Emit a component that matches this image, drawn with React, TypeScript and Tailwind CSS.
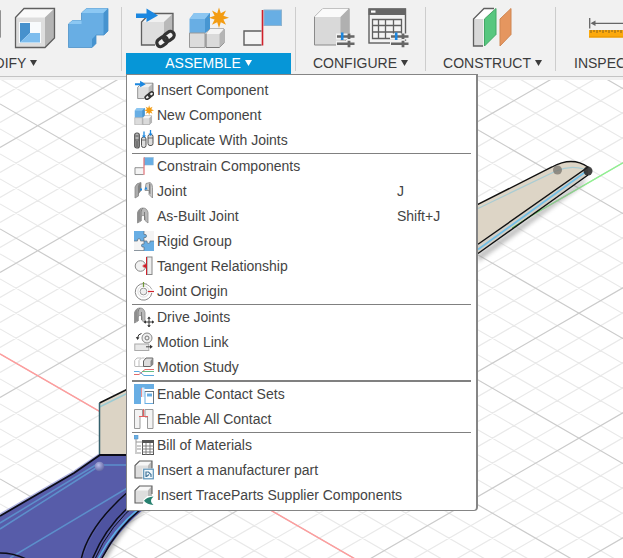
import type { ReactNode } from "react";

const G = "#5f5f5f";
const BLUE = "#68aee4";

type IconProps = { children: ReactNode; box?: number; small?: boolean };

function Icon({ children, box = 42, small = false }: IconProps) {
  return (
    <svg
      viewBox={`0 0 ${box} ${box}`}
      className={small ? "size-5 shrink-0" : "size-[42px] shrink-0"}
      fill="none"
      aria-hidden="true"
    >
      {children}
    </svg>
  );
}

/* ---------- toolbar drawings, 42 × 42 units ---------- */

const chain = (
  <g transform="translate(31.5 32) rotate(-38)" stroke="#333" strokeWidth="3.2">
    <rect x="-10" y="-3.8" width="11.5" height="7.6" rx="3.8" />
    <rect x="-1.5" y="-3.8" width="11.5" height="7.6" rx="3.8" />
  </g>
);

const insertArt = (
  <>
    <path d="M7.5 15 16 6.5h23V31l-7 7H7.5z" fill="#dedede" />
    <path d="M7.5 15 16 6.5h23L30 15z" fill="#f0f0f0" />
    <path d="m30 15 9-8.5V31l-7 7h-2z" fill="#b9b9b9" />
    <path d="M21 38H7.5V15L16 6.5h23V24" stroke={G} strokeWidth="1.3" />
    <g stroke="#f1f1f1" strokeWidth="6">
      <path d="m25 36 13-9" />
    </g>
    {chain}
    <path d="M2 6.5h10.5v-5L24 8.5 12.5 15v-4H2z" fill="#1b87e0" />
  </>
);

const newArt = (
  <>
    <path d="M1.5 12 6 6h16v16l-5 4H1.5z" fill={BLUE} />
    <path d="M1.5 12 6 6h16l-5 6z" fill="#8cc6f1" />
    <path d="m17 12 5-6v16l-5 4z" fill="#4796d2" />
    <path d="M1.5 26H17v14.500H1.500z" fill="#dcdcdc" stroke="#999" />
    <path d="m18 27 4-5h14v14l-4.500 4.500H18z" fill="#dadada" stroke="#777" />
    <path d="m18 27 4-5h14l-4.500 5z" fill="#f4f4f4" />
    <path d="m31.500 27 4.500-5v14l-4.500 4.500z" fill="#b5b5b5" />
    <path
      d="m31 .5 1.800 5.700 5.200-2.600-2.600 5.200 5.600 1.900-5.600 1.900 2.600 5.200-5.200-2.600L31 21l-1.800-5.800-5.200 2.600 2.600-5.200-5.600-1.900 5.600-1.900L24 3.600l5.200 2.600z"
      fill="#f39c12"
    />
  </>
);

const constrainArt = (
  <>
    <rect x="22" y="3" width="17.500" height="15.500" fill={BLUE} stroke="#8fb4cf" />
    <path d="M19.500 24H2v14h17.500" fill="#f4f4f4" stroke={G} strokeWidth="1.400" />
    <path d="M20.500 3v35.500" stroke="#d0202b" strokeWidth="1.600" />
  </>
);

const sliders = (
  <>
    <path d="M23 29.500h19M23 36.700h19" stroke="#f1f1f1" strokeWidth="6" />
    <path d="M24 29.500h17.500M24 36.700h17.500" stroke="#666" strokeWidth="2.400" />
    <path d="M36 26.500v5.500M36 33.800v6.500" stroke="#666" strokeWidth="2.800" />
    <path d="M29.200 25.500V33" stroke="#1b87e0" strokeWidth="2.600" />
  </>
);

const previousArt = (
  <path d="M2 14 14 4h26v26L30 40H2z" fill="#c9c9c9" stroke={G} strokeWidth="1.300" />
);

const shellArt = (
  <>
    <path d="M1.500 10.500 10 1.500h30.500V31L31 40.500H1.500z" fill="#dedede" />
    <path d="M1.500 10.500 10 1.500h30.500L31 10.500z" fill="#fafafa" />
    <path d="m31 10.500 9.500-9V31L31 40.500z" fill="#b4b4b4" />
    <path d="M1.500 10.500 10 1.500h30.500V31L31 40.500H1.500z" stroke={G} strokeWidth="1.300" />
    <path d="M5 15h22v21H5z" fill="#f8fbfd" />
    <path d="M6 16h10v10L6 35.500z" fill="#4691cd" />
    <path d="m6 35.500 10-9.500h10v9.500z" fill="#7dbdee" />
  </>
);

const combineArt = (
  <>
    <path
      d="m.5 17 4-3.500h9V6l5-4.500H40V24l-4 4h-8v8.500l-4 4H.5z"
      fill={BLUE}
      stroke="#4c92c8"
      strokeWidth=".8"
    />
    <path d="m13.500 6 5-4.500H40L35.500 6zM.5 17l4-3.500h9V17z" fill="#8cc8f3" />
    <path d="m35.500 6 4.500-4.500V24l-4.500 4zM24 32l4-4v8.500l-4 4z" fill="#4693cf" />
  </>
);

const configureArt = (
  <>
    <path d="M1.500 10 10 1.500h26V30l-8 8H1.500z" fill="#d9d9d9" stroke="#8a8a8a" />
    <path d="M1.500 10 10 1.500h26L27.500 10z" fill="#fafafa" />
    <path d="M27.500 10 36 1.500V30l-8.500 8z" fill="#b0b0b0" />
    {sliders}
  </>
);

const tableArt = (
  <>
    <rect x="2" y="2" width="36.500" height="34" fill="#f3f3f3" stroke={G} strokeWidth="1.400" />
    <path d="M1.500 1.500H39v6.500H1.500z" fill="#666" />
    <path d="M4 3.500h4.500v2.200H4z" fill="#fff" />
    <path
      d="M5.500 12.500h29v19h-29zM11.500 12.500v19M18.500 12.500v19M26.500 12.500v19M5.500 18.500h29M5.500 25h29"
      stroke={G}
      strokeWidth="1.300"
    />
    {sliders}
  </>
);

const constructArt = (
  <>
    <path d="M1.500 12 12 1.500h10L11.500 12z" fill="#fff" />
    <path d="M1.500 12h9.500v27H1.500z" fill="#d8d8d8" />
    <path d="M11 39H1.500V12L12 1.500h10" stroke={G} strokeWidth="1.300" />
    <path d="M12.500 12 24 1.500v26L12.500 39z" fill="#57c77f" stroke="#43a866" />
    <path d="M28 12 39 1.500v26L28 39z" fill="#e5965f" stroke="#cf8652" />
  </>
);

const inspectArt = (
  <>
    <path d="M.7 11v10.500M41.300 11v10.500M3 16.300h36" stroke="#666" strokeWidth="1.300" />
    <path d="m1.500 16.300 5-2.800v5.600zM40.500 16.300l-5-2.800v5.600z" fill="#666" />
    <path d="M0 23h42v7.500H0z" fill="#fca90b" />
    <path d="M0 30h42" stroke="#e69500" />
    <path
      d="M2 23v3M5 23v2M8 23v3M11 23v2M14 23v3M17 23v2M20 23v3M23 23v2M26 23v3M29 23v2M32 23v3M35 23v2M38 23v3"
      stroke="#7a5a1c"
      strokeWidth=".9"
    />
  </>
);

/* ---------- menu drawings, 20 × 20 units ---------- */

const bracket = (
  <>
    <path d="M3.500 17V6.500Q5 2 9 2q4 0 5 4.500V17l-3-2.500v-4q-2-2.500-4 0V15z" fill="#b9b9b9" stroke="#8b8b8b" strokeWidth=".8" />
    <path d="M7 15V6q.5-3 2-4M10.500 14V6" stroke="#777" strokeWidth=".9" />
    <path d="M3.500 17V6.500Q4.500 3.500 7 2.500 6 5 6.500 14z" fill="#8d8d8d" />
  </>
);

const duplicateArt = (
  <>
    <rect x=".7" y="3" width="4.600" height="15" rx="2" fill="#b5b5b5" stroke="#555" strokeWidth="1.200" />
    <path d="M1 10h4M1.500 6h3" stroke="#555" />
    <path d="M1.500 11h3v6h-3z" fill="#777" />
    <rect x="7.500" y="7" width="4.500" height="10.500" rx="2" fill="#ddd" stroke="#555" />
    <rect x="14" y="4.500" width="5" height="11" rx="2" fill="#ddd" stroke="#555" />
    <path d="M7.500 10h4.500M14 8h5" stroke="#555" strokeWidth=".8" />
    <path d="M10 1.500V7M16.500 0v5" stroke="#1b87e0" strokeWidth="1.300" />
    <path d="m8 5.500 2 2.500 2-2.500zM14.500 3.500l2 2.500 2-2.500z" fill="#1b87e0" />
  </>
);

const jointArt = (
  <>
    <path d="M1 17V6q1-4 6-4.500v8L4.500 12v3z" fill="#aaa" stroke="#888" strokeWidth=".8" />
    <path d="M4 14V5q0-2 3-3.500v8z" fill="#828282" />
    <path d="m11 9.500 1-7 4-1q2.500 1 2.500 5V17L15 13.500v-4z" fill="#ccc" stroke="#858585" strokeWidth=".8" />
    <path d="m15 2 1.500 1.500v10L15 12z" fill="#808080" />
    <path d="M6 7.500h2v2H6zM10.500 8.500l1.500-3 1.500 3z" fill="#1b87e0" />
  </>
);

const rigidArt = (
  <>
    <path d="M0 0h10v10H0zM10 10h10v10H10z" fill={BLUE} />
    <path d="M10 0h10v10H10zM0 10h10v9.500H0z" fill="#f4f4f4" />
    <circle cx="11" cy="5" r="1.700" fill={BLUE} />
    <circle cx="9" cy="14.500" r="1.700" fill={BLUE} />
    <circle cx="5" cy="9.300" r="1.600" fill="#f4f4f4" />
    <circle cx="14.500" cy="10.700" r="1.600" fill="#f4f4f4" />
    <path
      d="M10 0v3.500q2.500-.6 2.500 1.500T10 6.500V13q-2.500-.6-2.500 1.500T10 16v3.500M0 10h3.500q-.5-2.300 1.500-2.300T6.500 10H13q-.5 2.300 1.500 2.300T16 10h4M0 19.500h10"
      stroke="#5d6c78"
      strokeWidth=".7"
    />
  </>
);

const tangentArt = (
  <>
    <circle cx="6.500" cy="10" r="5.300" fill="#f1f1f1" stroke="#888" />
    <rect x="13" y="1" width="5" height="17.500" fill="#eee" stroke="#888" />
    <path d="M12.500 1v18M8.500 10h4" stroke="#d0202b" />
    <path d="M9.500 8.500h2.500v3H9.500z" fill="#d0202b" />
  </>
);

const originArt = (
  <>
    <path d="M13 3.300A8.300 8.300 0 1 0 17.800 12" stroke="#888" />
    <path d="M12 3q4 1.500 6 5.500" stroke="#aaa" />
    <circle cx="9.500" cy="10.500" r="3.400" fill="#eee" stroke="#999" />
    <circle cx="9.500" cy="10.500" r="5.600" stroke="#ddd" />
    <path d="M9.500 1v5" stroke="#6f9836" strokeWidth="1.200" />
    <path d="M14 10.500h6" stroke="#d0202b" strokeWidth="1.200" />
  </>
);

const driveArt = (
  <>
    <g transform="translate(-3 -1)">{bracket}</g>
    <path d="M15 10.500v9M10.500 15h9" stroke="#333" />
    <path d="m15 9.500 1.800 2.200h-3.600zM15 20.500l1.800-2.200h-3.600zM9.800 15l2.200-1.800v3.600zM20.200 15 18 13.200v3.600z" fill="#333" />
  </>
);

const linkArt = (
  <>
    <circle cx="13" cy="6" r="5" fill="#eee" stroke="#888" />
    <circle cx="13" cy="6" r="2" stroke="#777" />
    <path d="M7.500 1.500Q4 2 3.500 6" stroke="#333" />
    <path d="m1.800 5 1.700 3L5.500 5.500z" fill="#333" />
    <rect x=".8" y="12" width="14" height="6.500" fill="#e8e8e8" stroke="#aaa" />
    <path d="M12 14.800h5" stroke="#444" />
    <path d="m16 12.800 2.800 2L16 16.800z" fill="#333" />
  </>
);

const studyArt = (
  <>
    <path d="M.7 9V3.500L3 1h4M5 9V3.500L7.500 1h3M.7 9.500H10" stroke="#bbb" />
    <path d="m9.500 4 2.500-3h6.800v6.500l-2.300 2h-7z" fill="#ddd" stroke="#666" />
    <path d="m16.500 4 2.300-3v6.500l-2.300 2z" fill="#888" />
    <path d="M0 17.500h5l6-5h9" stroke="#e16b6b" />
    <path d="M8 14.500h12" stroke="#55b779" strokeWidth=".9" />
    <path d="M0 14.500h5l5 4h10" stroke="#5aa8df" />
  </>
);

const contactSetsArt = (
  <>
    <path d="M0 0h7v20H0zM7 0h13v5H7z" fill={BLUE} />
    <path d="M8 3.500h2.500V13H8z" fill="#d8eafa" />
    <path d="M7.500 4v9" stroke="#eb8f8f" />
    <rect x="11" y="7.500" width="8.500" height="12" fill="#fff" stroke={BLUE} />
    <path d="M13 9.500h5v3h-5z" fill={BLUE} />
    <path d="M19.500 7v13M11 7.500h9" stroke="#666" strokeWidth=".8" />
  </>
);

const allContactArt = (
  <>
    <path d="M.5.5h18.500v19h-5V8H6v11.500H.5z" fill="#f3f3f3" />
    <path d="M.5 19.500V.5h8V7M11 7V.500h8v19h-5.500V8H11M6 8v11.500H.5" stroke="#999" />
    <path d="M9.500 0v7.500M5 7.500h9" stroke="#e36060" strokeWidth="1.200" />
  </>
);

const bomArt = (
  <>
    <path d="M0 0h4v4H0z" fill={BLUE} stroke="#5796c7" strokeWidth=".6" />
    <path d="M2 4v15M2 7h6M3 11h4M3 14h4M3 18h4" stroke="#999" />
    <rect x="8.500" y="5.500" width="11" height="14" fill="#fff" stroke="#555" />
    <path d="M8 5h12v3H8z" fill="#555" />
    <path d="M8 11h12M8 14h12M8 17h12M12 8v12M16 8v12" stroke="#777" strokeWidth=".9" />
  </>
);

const halfCube = (
  <>
    <path d="M1 5.500 5.500 1H18v14l-3 3H1z" fill="#dedede" />
    <path d="M1 5.500 5.500 1H18l-4 4.500z" fill="#f7f7f7" />
    <path d="M14 5.500 18 1v12l-4 4z" fill="#b9b9b9" />
    <path d="M9 18H1V5.500L5.500 1H18v8" stroke={G} strokeWidth="1.100" />
  </>
);

const manufacturerArt = (
  <>
    {halfCube}
    <path d="M8.500 8.500H20V20H8.500z" fill="#fff" />
    <rect x="9.700" y="9.200" width="9.600" height="9.600" fill="#f2f8fc" stroke="#5d93b8" strokeWidth="1.200" />
    <path d="M12 17v-5h2.500l2.500 2.500V17M12.500 16.500l2.500-2" stroke="#47789b" strokeWidth="1.200" />
  </>
);

const tracePartsArt = (
  <>
    {halfCube}
    <path d="M9.500 20v-5.500l4-3.500H20v9z" fill="#fff" />
    <path d="M19.500 11.500Q13 12 10 15.800q3 3.800 9.500 4.200-5-4 0-8.500z" fill="#26806f" />
  </>
);

/* ---------- menu data ---------- */

type Item = { label: string; art: ReactNode; box?: number; keys?: string };

const menu: { rule: string; items: Item[] }[] = [
  {
    rule: "",
    items: [
      { label: "Insert Component", art: insertArt, box: 41 },
      { label: "New Component", art: newArt, box: 41 },
      { label: "Duplicate With Joints", art: duplicateArt },
    ],
  },
  {
    rule: "border-t",
    items: [
      { label: "Constrain Components", art: constrainArt, box: 41 },
      { label: "Joint", art: jointArt, keys: "J" },
      { label: "As-Built Joint", art: bracket, keys: "Shift+J" },
      { label: "Rigid Group", art: rigidArt },
      { label: "Tangent Relationship", art: tangentArt },
      { label: "Joint Origin", art: originArt },
    ],
  },
  {
    rule: "border-t",
    items: [
      { label: "Drive Joints", art: driveArt },
      { label: "Motion Link", art: linkArt },
      { label: "Motion Study", art: studyArt },
    ],
  },
  {
    rule: "border-t-2",
    items: [
      { label: "Enable Contact Sets", art: contactSetsArt },
      { label: "Enable All Contact", art: allContactArt },
    ],
  },
  {
    rule: "border-t",
    items: [
      { label: "Bill of Materials", art: bomArt },
      { label: "Insert a manufacturer part", art: manufacturerArt },
      { label: "Insert TraceParts Supplier Components", art: tracePartsArt },
    ],
  },
];

function AssembleMenu() {
  return (
    <div
      role="menu"
      aria-label="Assemble"
      className="absolute left-0 top-full z-10 w-[352px] rounded-br-sm border border-r-2 border-[#858585] bg-white px-[5px] pt-[3px] pb-0.5"
    >
      {menu.map((group) => (
        <div key={group.items[0].label} role="group" className={`border-[#808080] ${group.rule}`}>
          {group.items.map((item) => (
            <button
              key={item.label}
              type="button"
              role="menuitem"
              className="flex h-[25px] w-full items-center pb-0.5 pl-0.5 text-left text-sm whitespace-nowrap text-[#444]"
            >
              <Icon box={item.box ?? 20} small>
                {item.art}
              </Icon>
              <span className="w-60 shrink-0 pl-[3px]">{item.label}</span>
              {item.keys && <kbd className="pl-[3px] font-[inherit] text-sm">{item.keys}</kbd>}
            </button>
          ))}
        </div>
      ))}
    </div>
  );
}

/* ---------- toolbar ---------- */

type GroupProps = { label: string; icons: { name: string; art: ReactNode }[]; className: string; open?: boolean };

function ToolGroup({ label, icons, className, open = false }: GroupProps) {
  return (
    <div className={`relative flex h-[74px] shrink-0 flex-col items-center pt-[7px] ${className}`}>
      <div className="flex h-[46px] gap-3">
        {icons.map((icon) => (
          <button key={icon.name} type="button" aria-label={icon.name} className="h-[42px]">
            <Icon>{icon.art}</Icon>
          </button>
        ))}
      </div>
      <button
        type="button"
        aria-haspopup="menu"
        aria-expanded={open}
        className={`flex h-[21px] w-full items-center justify-center gap-1 pb-0.5 text-sm ${
          open ? "bg-[#0696d7] text-white" : "text-[#3c3c3c]"
        }`}
      >
        {label}
        <svg viewBox="0 0 7 6" className="h-1.5 w-[7px]" fill="currentColor" aria-hidden="true">
          <path d="M0 0h7L3.500 6z" />
        </svg>
      </button>
      {open && <AssembleMenu />}
    </div>
  );
}

function Divider() {
  return <div className="mt-[7px] h-16 w-px shrink-0 bg-[#cdcdcd]" />;
}

function Toolbar() {
  return (
    <header className="relative z-10 flex h-20 shrink-0 items-start bg-[#f1f1f1]">
      <div className="absolute inset-x-0 bottom-[3px] h-px bg-[#c4c4c4]" />
      <ToolGroup
        label="MODIFY"
        className="-ml-10 w-[161px] items-start [&>button]:justify-start [&>button]:pl-3"
        icons={[
          { name: "Fillet", art: previousArt },
          { name: "Shell", art: shellArt },
          { name: "Combine", art: combineArt },
        ]}
      />
      <Divider />
      <ToolGroup
        label="ASSEMBLE"
        open
        className="mx-1 w-[165px]"
        icons={[
          { name: "Insert Component", art: insertArt },
          { name: "New Component", art: newArt },
          { name: "Constrain Components", art: constrainArt },
        ]}
      />
      <Divider />
      <ToolGroup
        label="CONFIGURE"
        className="w-[129px]"
        icons={[
          { name: "Configure", art: configureArt },
          { name: "Configuration Table", art: tableArt },
        ]}
      />
      <Divider />
      <ToolGroup label="CONSTRUCT" className="w-[129px] pl-1" icons={[{ name: "Offset Plane", art: constructArt }]} />
      <Divider />
      <ToolGroup label="INSPECT" className="px-[18px]" icons={[{ name: "Measure", art: inspectArt }]} />
    </header>
  );
}

/* ---------- viewport ---------- */

const SLOPE = 0.5774;
const SPAN = 1600;

function gridPath(major: boolean) {
  let d = "";
  for (let k = -60; k < 80; k++) {
    if ((k % 5 === 0) !== major) continue;
    const down = 103.9 + 25 * k;
    const up = 147.5 + 25 * k;
    d += `M0 ${down}L${SPAN} ${down + SLOPE * SPAN}M0 ${up}L${SPAN} ${up - SLOPE * SPAN}`;
  }
  return d;
}

function Viewport() {
  return (
    <main className="relative flex-1 bg-white">
      <svg
        viewBox="0 80 623 478"
        preserveAspectRatio="xMinYMin slice"
        className="absolute inset-0 size-full"
        fill="none"
        role="img"
        aria-label="Model viewport"
      >
        <defs>
          <filter id="soft" x="-20%" y="-20%" width="140%" height="140%">
            <feGaussianBlur stdDeviation="2" />
          </filter>
          <radialGradient id="ball" cx=".4" cy=".35" r=".7">
            <stop offset="0" stopColor="#b9bce8" />
            <stop offset="1" stopColor="#5b5f9f" />
          </radialGradient>
        </defs>
        <path d={gridPath(false)} stroke="#e9e9e9" strokeWidth="1.200" />
        <path d={gridPath(true)} stroke="#cbcbcb" strokeWidth="1.200" />
        <path d="M0 353.900 400 584.900" stroke="#ff9c9c" strokeWidth="1.400" />
        <path d="M623 162.800 478 246.500" stroke="#8df58d" strokeWidth="1.400" />

        {/* upper arm */}
        <path d="M478 254 588 176l-6 10-104 76z" fill="#8c8c8c" opacity=".55" filter="url(#soft)" />
        <path d="M470 208 552 167Q572 156 588 167v8L470 259z" fill="#ddd5c6" />
        <path d="M478 253 588 175v-8L478 244z" fill="#d3cfc6" />
        <path d="M478 208.500 556 171q14-6 28-2" stroke="#a9ccd3" strokeWidth="1.300" />
        <path d="M478 249.500 586 171.500" stroke="#73bfe6" strokeWidth="1.800" />
        <path d="M512 228 540 210" stroke="#49c94d" />
        <path d="M470 208.300 552 167Q572 156 588 167L478 244.300M588 175 478 253.500" stroke="#111" strokeWidth="1.400" />
        <circle cx="557.500" cy="170" r="4.500" fill="#77736c" opacity=".75" />
        <circle cx="588" cy="171" r="4.500" fill="#222" opacity=".85" />

        {/* lower arm */}
        <path d="M99.500 403 140 383v75H99.500z" fill="#dcd4c5" />
        <path d="M99.500 407 140 387" stroke="#9dcbd2" strokeWidth="1.500" />
        <path d="M99.500 403 140 383" stroke="#111" strokeWidth="1.500" />
        <path d="M99.500 403v53" stroke="#35616d" strokeWidth="1.500" />
        <path d="M148 508q-24 18-42 52l-8-2 30-48z" fill="#777" opacity=".6" filter="url(#soft)" />
        <path d="M0 516 74 473l26-18h50v50Q124 522 101 560H0z" fill="#575ca9" />
        <path d="M0 514.500 74 471.500l25-17" stroke="#8f94d6" strokeWidth="2" opacity=".7" />
        <path d="M130 491Q95 520 82 560h10q12-32 46-64z" fill="#4e53a0" />
        <path d="M0 523 99 463M0 529 74 482l22-14M127 465h-26M134 484 10 558" stroke="#5c8fcb" strokeWidth="1.500" />
        <path d="M0 516 74 473l26-18h40" stroke="#0c0c18" strokeWidth="1.800" />
        <path
          d="M0 553q14 0 26 6M130 490Q88 526 81 560M140 497Q106 524 92 560M146 505Q118 526 101 560"
          stroke="#0c0c18"
          strokeWidth="1.500"
        />
        <path d="M140 501Q110 524 94.500 560" stroke="#0c0c18" />
        <path d="M142 506Q114 528 97.500 560" stroke="#5cb4e6" strokeWidth="1.500" />
        <circle cx="99.500" cy="466.500" r="4.800" fill="url(#ball)" />
      </svg>
    </main>
  );
}

export default function App() {
  return (
    <div className="flex min-h-screen flex-col overflow-hidden bg-white font-['Liberation_Sans',Arial,sans-serif]">
      <Toolbar />
      <Viewport />
    </div>
  );
}
